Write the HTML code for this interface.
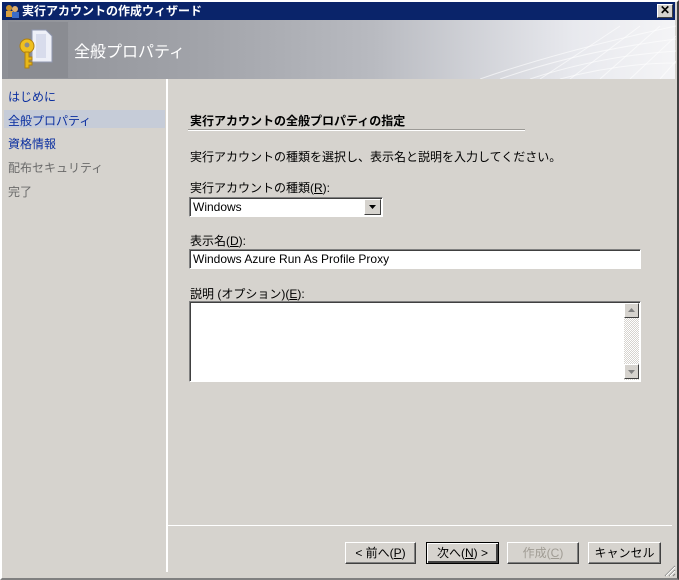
<!DOCTYPE html>
<html><head><meta charset="utf-8"><style>
*{margin:0;padding:0;box-sizing:border-box}
body{width:679px;height:580px;overflow:hidden;background:#d6d3ce;font-family:"Liberation Sans","Noto Sans CJK JP","IPAGothic",sans-serif;font-size:12px;color:#000;position:relative}
.a{position:absolute}
.win{left:0;top:0;width:679px;height:580px;border-left:2px solid #fff;border-top:2px solid #fff;border-right:2px solid #404040;border-bottom:2px solid #808080}
.title{left:2px;top:2px;width:673px;height:18px;background:#0a246a;color:#fff;font-weight:bold;font-size:12px;line-height:18px;padding-left:20px}
.hdr{left:2px;top:20px;width:673px;height:59px;background:linear-gradient(90deg,#8e9096 0%,#a2a4aa 30%,#b8bac0 55%,#e8e9ee 85%,#f4f4f6 100%)}
.nav{color:#0b2fa0;left:8px}
.inp{background:#fff;border-top:1px solid #808080;border-left:1px solid #808080;border-right:1px solid #fff;border-bottom:1px solid #fff;box-shadow:inset 1px 1px 0 #404040}
.btn{height:22px;top:542px;border:1px solid;border-color:#fff #404040 #404040 #fff;box-shadow:inset -1px -1px 0 #808080;text-align:center;line-height:20px;background:#d6d3ce}
u{text-decoration:underline}
</style></head><body>
<div class="a win"></div>
<div class="a title">実行アカウントの作成ウィザード</div>
<svg class="a" style="left:4px;top:4px" width="16" height="14"><circle cx="5" cy="4" r="3" fill="#c8902c"/><rect x="2" y="7" width="7" height="6" fill="#d8a040"/><circle cx="11" cy="5" r="3" fill="#e0b070"/><rect x="8" y="8" width="7" height="6" fill="#3a6cc8"/></svg>
<div class="a" style="left:657px;top:4px;width:16px;height:14px;background:#d6d3ce;border:1px solid;border-color:#fff #404040 #404040 #fff;font-weight:bold;font-size:12px;line-height:11px;text-align:center">✕</div>
<div class="a hdr"></div>
<svg class="a" style="left:480px;top:21px" width="196" height="58"><g stroke="#fff" stroke-opacity=".6" fill="none"><path d="M0 58 Q80 30 196 5"/><path d="M20 58 Q100 30 196 18"/><path d="M50 58 Q120 35 196 30"/><path d="M80 58 Q140 42 196 42"/><path d="M60 58 L140 5"/><path d="M90 58 L160 5"/><path d="M120 58 L180 5"/><path d="M150 58 L196 15"/><path d="M180 58 L196 40"/></g></svg>
<div class="a" style="left:8px;top:22px;width:60px;height:56px;background:#8a8c92"></div>
<svg class="a" style="left:12px;top:26px" width="46" height="46"><path d="M20 4 h14 l6 6 v26 h-20z" fill="#eef0f8" stroke="#9098b0"/><path d="M24 8 h10 v24 h-10z" fill="#d8dcec"/><circle cx="15" cy="20" r="7" fill="#f0c020" stroke="#b08010"/><circle cx="15" cy="19" r="2.5" fill="#8a8c92"/><path d="M13 26 v16 h4 v-3 h3 v-3 h-3 v-2 h3 v-3 h-3 v-5z" fill="#e8b818" stroke="#b08010"/></svg>
<div class="a" style="left:74px;top:38px;color:#fff;font-size:16px">全般プロパティ</div>
<div class="a" style="left:4px;top:110px;width:161px;height:18px;background:#c6ccd8"></div>
<div class="a nav" style="top:88px">はじめに</div>
<div class="a nav" style="top:112px">全般プロパティ</div>
<div class="a nav" style="top:135px">資格情報</div>
<div class="a" style="left:8px;top:159px;color:#6b6b6b">配布セキュリティ</div>
<div class="a" style="left:8px;top:183px;color:#6b6b6b">完了</div>
<div class="a" style="left:166px;top:79px;width:2px;height:493px;background:#fff"></div>
<div class="a" style="left:168px;top:525px;width:504px;height:1px;background:#fff"></div>
<div class="a" style="left:190px;top:112px;font-weight:bold">実行アカウントの全般プロパティの指定</div>
<div class="a" style="left:188px;top:129px;width:337px;height:1px;background:#9c9a96"></div>
<div class="a" style="left:188px;top:130px;width:337px;height:1px;background:#fff"></div>
<div class="a" style="left:190px;top:148px">実行アカウントの種類を選択し、表示名と説明を入力してください。</div>
<div class="a" style="left:190px;top:179px">実行アカウントの種類(<u>R</u>):</div>
<div class="a inp" style="left:189px;top:197px;width:194px;height:20px;padding:2px 0 0 3px">Windows</div>
<div class="a" style="left:364px;top:199px;width:17px;height:16px;background:#d6d3ce;border:1px solid;border-color:#fff #404040 #404040 #fff"><svg width="15" height="14"><path d="M4 5 h7 l-3.5 4z" fill="#000"/></svg></div>
<div class="a" style="left:190px;top:232px">表示名(<u>D</u>):</div>
<div class="a inp" style="left:189px;top:249px;width:452px;height:20px;padding:2px 0 0 3px">Windows Azure Run As Profile Proxy</div>
<div class="a" style="left:190px;top:285px">説明 (オプション)(<u>E</u>):</div>
<div class="a inp" style="left:189px;top:301px;width:452px;height:81px"></div>
<div class="a" style="left:624px;top:303px;width:15px;height:77px;background:repeating-conic-gradient(#fff 0 25%,#d6d3ce 0 50%) 0 0/2px 2px"></div>
<div class="a" style="left:624px;top:303px;width:15px;height:15px;background:#d6d3ce;border:1px solid;border-color:#fff #404040 #404040 #fff"><svg width="13" height="13"><path d="M3 8 h7 l-3.5-4z" fill="#808080"/></svg></div>
<div class="a" style="left:624px;top:364px;width:15px;height:15px;background:#d6d3ce;border:1px solid;border-color:#fff #404040 #404040 #fff"><svg width="13" height="13"><path d="M3 5 h7 l-3.5 4z" fill="#808080"/></svg></div>
<div class="a btn" style="left:345px;width:71px">&lt; 前へ(<u>P</u>)</div>
<div class="a btn" style="left:426px;width:73px;border:1px solid #000;box-shadow:inset 1px 1px 0 #fff,inset -2px -2px 0 #404040">次へ(<u>N</u>) &gt;</div>
<div class="a btn" style="left:507px;width:72px;color:#a09c94">作成(<u>C</u>)</div>
<div class="a btn" style="left:588px;width:73px">キャンセル</div>
<svg class="a" style="left:663px;top:564px" width="13" height="13"><g stroke="#808080"><path d="M12 2 L2 12M12 6 L6 12M12 10 L10 12"/></g><g stroke="#fff"><path d="M12 3 L3 12M12 7 L7 12"/></g></svg>
</body></html>
